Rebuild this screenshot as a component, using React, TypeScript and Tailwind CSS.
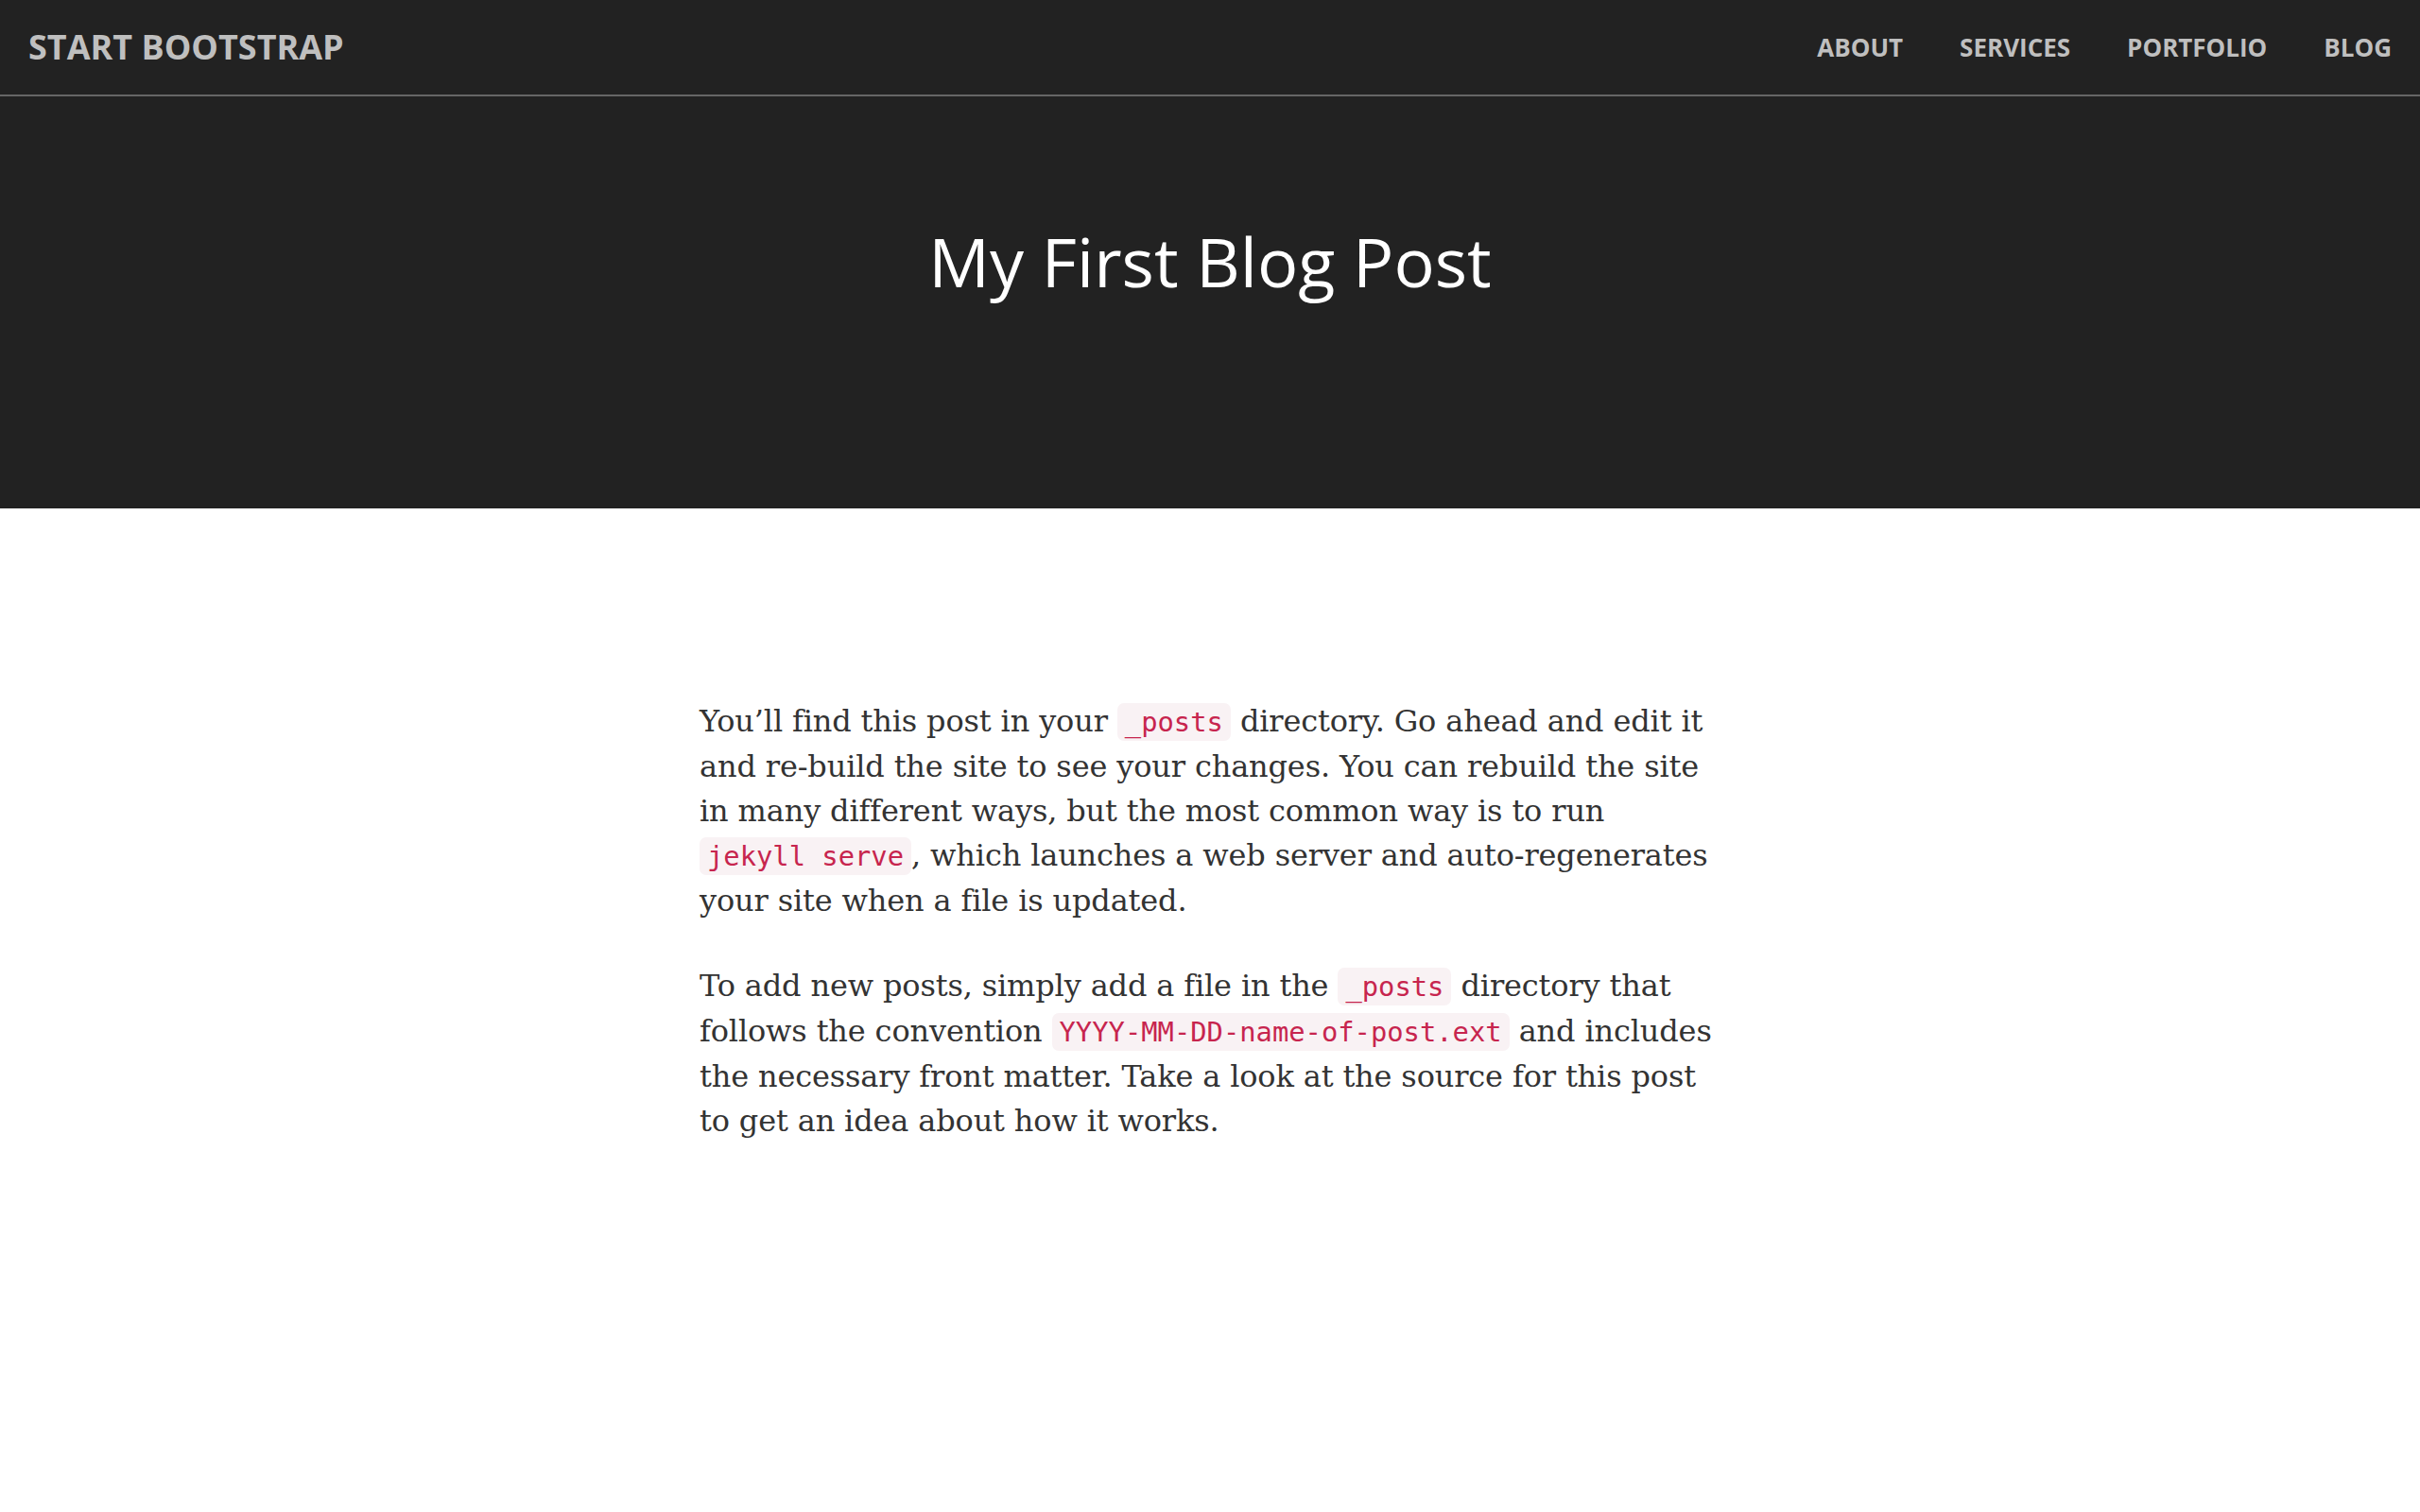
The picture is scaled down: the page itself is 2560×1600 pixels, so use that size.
import type { ReactNode } from "react"

const links = ["About", "Services", "Portfolio", "Blog"]

function Code({ children }: { children: ReactNode }) {
  return (
    <code className="whitespace-nowrap rounded-[7px] bg-[#f9f2f4] px-[8px] py-[3px] font-['DejaVu_Sans_Mono',monospace] text-[28.8px] tracking-normal text-[#c7254e]">
      {children}
    </code>
  )
}

export default function App() {
  return (
    <div className="min-h-screen bg-white">
      <header className="bg-[#222222]">
        <nav className="flex h-[102px] items-center justify-between border-b-2 border-[#666666] px-[30px] font-['Open_Sans',sans-serif] font-bold text-[#bfbfbf]">
          <a href="#" className="text-[36px]">
            START BOOTSTRAP
          </a>
          <ul className="flex gap-[60px] text-[26px] uppercase">
            {links.map((link) => (
              <li key={link}>
                <a href="#">{link}</a>
              </li>
            ))}
          </ul>
        </nav>
        <div className="pb-[222px] pt-[135px] text-center">
          <h1 className="font-['Open_Sans',sans-serif] text-[72px] leading-[1.1] font-normal text-white">My First Blog Post</h1>
        </div>
      </header>

      <main className="mx-auto max-w-[1080px] pt-[202px] font-['DejaVu_Serif',serif] text-[32px] leading-[47px] tracking-[-0.15px] text-[#333333]">
        <p className="mb-[43px]">
          You’ll find this post in your <Code>_posts</Code> directory. Go ahead and edit it and re&#8209;build the site to see your
          changes. You can rebuild the site in many different ways, but the most common way is to run <Code>jekyll serve</Code>,
          which launches a web server and auto&#8209;regenerates your site when a file is updated.
        </p>
        <p>
          To add new posts, simply add a file in the <Code>_posts</Code> directory that follows the convention{" "}
          <Code>YYYY-MM-DD-name-of-post.ext</Code> and includes the necessary front matter. Take a look at the source for this post
          to get an idea about how it works.
        </p>
      </main>
    </div>
  )
}
